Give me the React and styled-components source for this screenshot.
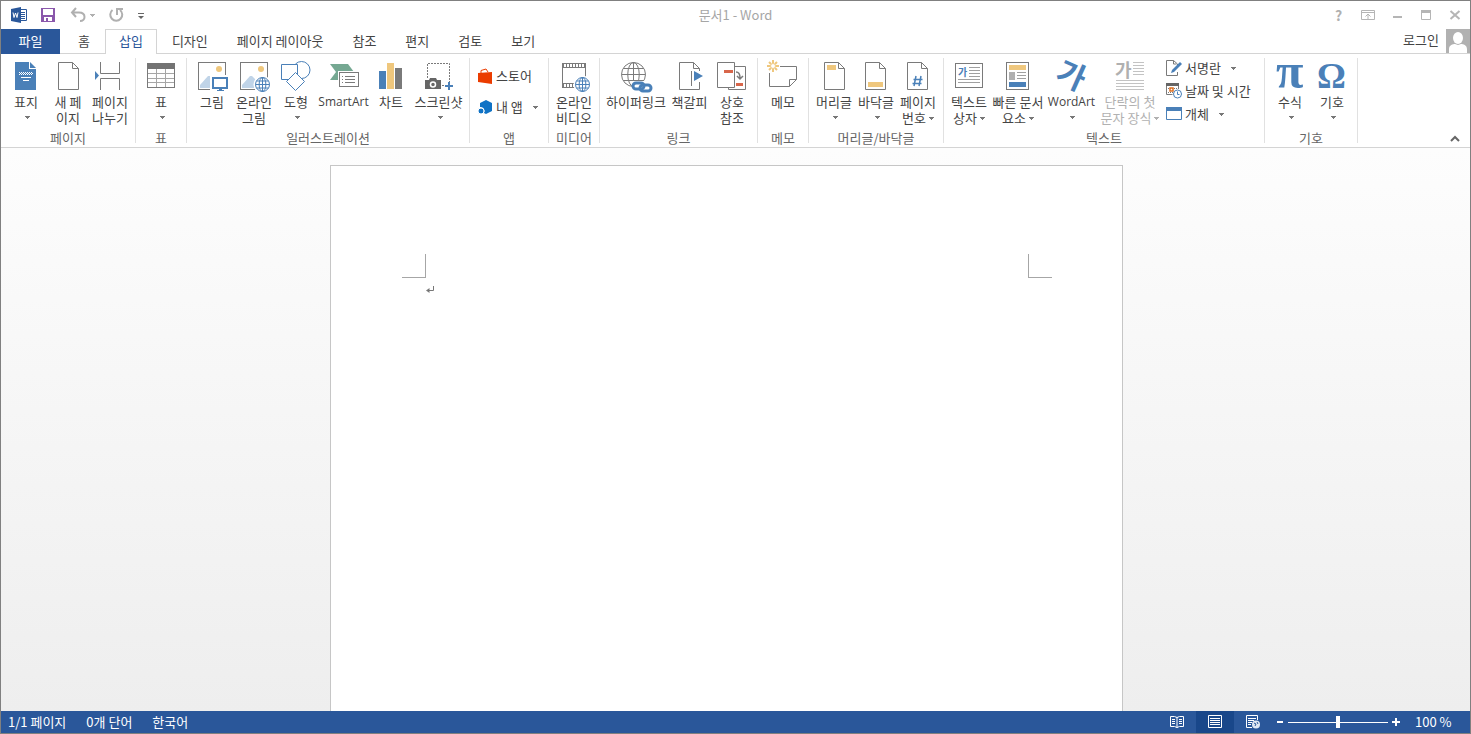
import React, { useState } from "react";
import styled, { createGlobalStyle } from "styled-components";

const BLUE = "#4a80b8";
const GRAY = "#7a7a7a";
const YELLOW = "#efc77d";

/* ---------- icons ---------- */

const Icon = ({ size = 32, children }) => (
    <IconSvg width={size} height={size} viewBox={`0 0 ${size} ${size}`} fill="none" aria-hidden="true">
        {children}
    </IconSvg>
);

const Caret = () => (
    <CaretSvg width="5" height="3" viewBox="0 0 5 3" aria-hidden="true">
        <path d="M0 0h5v1h-1v1h-1v1h-1v-1h-1v-1h-1z" fill="currentColor" />
    </CaretSvg>
);

const Sheet = ({ x = 5 }) => (
    <path
        d={`M${x + 0.5} 2.5h14l6 6v21h-20zM${x + 14.5} 2.5v6h6`}
        fill="#fff"
        stroke={GRAY}
    />
);

const Globe = ({ cx, cy, r, color = BLUE }) => (
    <g stroke={color}>
        <circle cx={cx} cy={cy} r={r} fill="#fff" />
        <ellipse cx={cx} cy={cy} rx={r * 0.48} ry={r} />
        <path d={`M${cx} ${cy - r}v${2 * r}M${cx - r} ${cy}h${2 * r}`} />
        <path d={`M${cx - r * 0.86} ${cy - r / 2}h${r * 1.72}M${cx - r * 0.86} ${cy + r / 2}h${r * 1.72}`} />
    </g>
);

const Picture = () => (
    <>
        <rect x="2.5" y="2.5" width="27" height="27" fill="#fff" stroke={GRAY} />
        <circle cx="23" cy="9" r="3" fill={YELLOW} />
        <path d="M4 28V25L12 16h2l5 5v7z" fill="#c0d4e8" />
    </>
);

const CoverIcon = () => (
    <Icon>
        <path d="M5 2h14v7h7v21H5z" fill={BLUE} />
        <path d="M20 2l6 6h-6z" fill={BLUE} />
        <path d="M9 12.5h14M9 14.5h14" stroke="#fff" strokeDasharray="1 1" />
        <path d="M9 13.5h14" stroke="#fff" strokeDasharray="1 1" strokeDashoffset="1" />
        <path d="M11 17.5h10M13 20.5h6" stroke="#fff" />
    </Icon>
);

const NewPageIcon = () => (
    <Icon>
        <Sheet x={6} />
    </Icon>
);

const PageBreakIcon = () => (
    <Icon>
        <path d="M6.5 2v11.5h19V2M6.5 30V18.5h19V30" stroke={GRAY} />
        <path d="M1 11l4 4.5L1 20z" fill={BLUE} />
    </Icon>
);

const TableIcon = () => (
    <Icon>
        <rect x="2.5" y="3.5" width="27" height="24" fill="#fff" stroke={GRAY} />
        <path d="M2 3h28v6H2z" fill="#737373" />
        <path d="M11.5 9v18M20.5 9v18M3 13.5h26M3 18.5h26M3 22.5h26" stroke="#a6a6a6" />
    </Icon>
);

const PictureIcon = () => (
    <Icon>
        <Picture />
        <path d="M14 15h19v15H14z" fill="#fff" />
        <rect x="17" y="18" width="14" height="10" fill="#fff" stroke={BLUE} strokeWidth="2" />
        <path d="M23 28h3v2h2v1h-7v-1h2z" fill={BLUE} />
    </Icon>
);

const OnlinePictureIcon = () => (
    <Icon>
        <Picture />
        <circle cx="24.5" cy="24.5" r="9" fill="#fff" />
        <Globe cx={24.5} cy={24.5} r={7} />
    </Icon>
);

const ShapesIcon = () => (
    <Icon>
        <g fill="#fff" stroke={BLUE}>
            <circle cx="21.5" cy="10" r="8.5" />
            <path d="M1.5 4.5h16v15h-16z" />
            <path d="M15.5 12.5l9 9-9 9-9-9z" />
        </g>
    </Icon>
);

const SmartArtIcon = () => (
    <Icon>
        <path d="M2 4h18l6 8-5 8H2l6-8z" fill="#75a892" />
        <rect x="10" y="11" width="22" height="17" fill="#fff" />
        <rect x="11.5" y="12.5" width="19" height="14" fill="#fff" stroke={GRAY} />
        <path d="M14 16.5h1m2 0h10M14 19.5h1m2 0h10M14 22.5h1m2 0h10" stroke={GRAY} />
    </Icon>
);

const ChartIcon = () => (
    <Icon>
        <path d="M4 11h7v18H4z" fill={BLUE} />
        <path d="M12 3h7v26h-7z" fill={YELLOW} />
        <path d="M20 8h7v21h-7z" fill={GRAY} />
    </Icon>
);

const ScreenshotIcon = () => (
    <Icon>
        <path d="M4.5 18V3.5h22V22M19 25.5h4" stroke={GRAY} strokeDasharray="2 1" />
        <path d="M2 20h4l1-2h6l1 2h4v9H2z" fill="#666" />
        <circle cx="10" cy="24.5" r="2.5" stroke="#fff" strokeWidth="1.5" />
        <path d="M26 22v8M22 26h8" stroke={BLUE} strokeWidth="2" />
    </Icon>
);

const StoreIcon = () => (
    <Icon size={16}>
        <path d="M4 5V2.500l5-1.500 2 3" stroke="#eb3c00" />
        <path d="M1 5l14-1v12l-14-2z" fill="#eb3c00" />
    </Icon>
);

const MyAppsIcon = () => (
    <Icon size={16}>
        <path d="M9 1l6 3v8l-6 3-2-1a4 4 0 0 0-4-6V4z" fill="#0f72c5" />
        <circle cx="4" cy="12" r="3" fill="#0f72c5" stroke="#fff" />
    </Icon>
);

const VideoIcon = () => (
    <Icon>
        <path d="M4 3h24v5H4zM4 23h15v5H4z" fill={GRAY} />
        <path d="M4.5 8v15M27.5 8v12" stroke={GRAY} />
        <path d="M6 5.5h21M6 25.5h13" stroke="#fff" strokeWidth="3" strokeDasharray="2 1" />
        <circle cx="24.5" cy="24.5" r="9" fill="#fff" />
        <Globe cx={24.5} cy={24.5} r={7} />
    </Icon>
);

const HyperlinkIcon = () => (
    <Icon>
        <Globe cx={13.5} cy={14.5} r={12} color={GRAY} />
        <path d="M12 21h20v12H12z" fill="#fff" />
        <g stroke={BLUE} strokeWidth="3">
            <rect x="13" y="23" width="11" height="6" rx="3" />
            <rect x="20" y="25" width="11" height="6" rx="3" />
        </g>
    </Icon>
);

const BookmarkIcon = () => (
    <Icon>
        <Sheet />
        <path d="M16 11h14v11H16z" fill="#fff" />
        <path d="M17.5 11v15" stroke={GRAY} />
        <path d="M20 11l9 5-9 5z" fill={BLUE} />
    </Icon>
);

const CrossRefIcon = () => (
    <Icon>
        <path d="M12.5 6.5h17v23h-17z" fill="#fff" stroke={GRAY} />
        <path d="M1.5 2.5h17v25h-17z" fill="#fff" stroke={GRAY} />
        <path d="M8 10h9v3H8zM20 23h7v3h-7z" fill="#d8664a" />
        <path d="M20 12c3 0 4 2 4 6M21 16l3 3 3-3" stroke={GRAY} strokeWidth="1.500" />
    </Icon>
);

const MemoIcon = () => (
    <Icon>
        <path d="M13 6.5h16.5v13l-7 7h-20V13M29.5 19.5h-7v7" stroke={GRAY} />
        <g stroke={YELLOW} strokeWidth="2">
            <path d="M6 0v3M6 9v3M0 6h3M9 6h3M2 2l2 2M8 8l2 2M10 2L8 4M4 8l-2 2" />
            <circle cx="6" cy="6" r="2.5" strokeWidth="1" />
        </g>
    </Icon>
);

const HeaderIcon = () => (
    <Icon>
        <Sheet x={6} />
        <path d="M9 5h9v5H9z" fill={YELLOW} />
    </Icon>
);

const FooterIcon = () => (
    <Icon>
        <Sheet />
        <path d="M8 22h15v5H8z" fill={YELLOW} />
    </Icon>
);

const PageNumberIcon = () => (
    <Icon>
        <Sheet />
        <path d="M14 16l-2 10M19 16l-2 10M11.5 19.5h9M10.5 23.5h9" stroke={BLUE} strokeWidth="1.500" />
    </Icon>
);

const TextBoxIcon = () => (
    <Icon>
        <rect x="2.5" y="3.5" width="27" height="24" fill="#fff" stroke={GRAY} />
        <Glyph x="5" y="16" size={10} fill={BLUE}>가</Glyph>
        <path d="M16 7.5h11M16 10.5h11M16 13.5h11M16 16.5h11M5 19.5h22M5 22.5h22" stroke="#a0a0a0" />
    </Icon>
);

const QuickPartsIcon = () => (
    <Icon>
        <rect x="4.5" y="2.5" width="22" height="27" fill="#fff" stroke={GRAY} />
        <path d="M7 5h17v5H7z" fill={YELLOW} />
        <path d="M7 12h6v8H7z" fill="#b0b0b0" />
        <path d="M15 12.5h9M15 15.5h9M15 18.5h9" stroke="#a0a0a0" />
        <path d="M7 22h17v5H7z" fill={BLUE} />
    </Icon>
);

const WordArtIcon = () => (
    <Icon>
        <Glyph x="1" y="27" size={31} fill={BLUE} transform="rotate(24 16 16)">가</Glyph>
    </Icon>
);

const DropCapIcon = () => (
    <Icon>
        <Glyph x="1" y="17" size={18} fill="#b0b0b0">가</Glyph>
        <path
            d="M19 2.5h11M19 5.5h11M19 8.5h11M19 11.5h11M19 14.5h11M2 20.5h28M2 23.5h28M2 26.5h28M2 29.5h28"
            stroke="#c3c3c3"
        />
    </Icon>
);

const SignatureIcon = () => (
    <Icon size={16}>
        <path d="M11.5 5V4l-4-3.500h-7v15h11V12M7.5 .5V4h3" stroke={GRAY} />
        <path d="M5 13l1-3 8-8 2 2-8 8z" fill={BLUE} />
    </Icon>
);

const DateIcon = () => (
    <Icon size={16}>
        <path d="M0 0h13v3H0z" fill="#666" />
        <path d="M.5 3v8.5h6M12.5 3v3" stroke={GRAY} />
        <path d="M2 5.5h9M2 9.5h5" stroke={GRAY} strokeDasharray="1 1" />
        <rect x="4" y="5" width="3" height="3" stroke="#e07020" strokeWidth="1.500" />
        <circle cx="11.5" cy="11" r="4" fill="#fff" stroke={BLUE} />
        <path d="M11.5 8.5v3h2" stroke={BLUE} />
    </Icon>
);

const ObjectIcon = () => (
    <Icon size={16}>
        <path d="M.5 2.5h15v11H.5z" fill="#fff" stroke={BLUE} />
        <path d="M0 1h16v4H0z" fill={BLUE} />
    </Icon>
);

const EquationIcon = () => (
    <Icon>
        <Glyph x="2" y="28" size={50} fill={BLUE} $serif>π</Glyph>
    </Icon>
);

const SymbolIcon = () => (
    <Icon>
        <Glyph x="1" y="28" size={36} fill={BLUE} $serif>Ω</Glyph>
    </Icon>
);

/* ---------- data ---------- */

const TABS = ["홈", "삽입", "디자인", "페이지 레이아웃", "참조", "편지", "검토", "보기"];

const GROUPS = [
    {
        name: "페이지",
        tools: [
            { icon: CoverIcon, lines: ["표지"], menu: true },
            { icon: NewPageIcon, lines: ["새 페", "이지"] },
            { icon: PageBreakIcon, lines: ["페이지", "나누기"] },
        ],
    },
    { name: "표", tools: [{ icon: TableIcon, lines: ["표"], menu: true }] },
    {
        name: "일러스트레이션",
        tools: [
            { icon: PictureIcon, lines: ["그림"] },
            { icon: OnlinePictureIcon, lines: ["온라인", "그림"] },
            { icon: ShapesIcon, lines: ["도형"], menu: true },
            { icon: SmartArtIcon, lines: ["SmartArt"], width: 53, latin: true },
            { icon: ChartIcon, lines: ["차트"] },
            { icon: ScreenshotIcon, lines: ["스크린샷"], menu: true, width: 53 },
        ],
    },
    {
        name: "앱",
        wide: true,
        small: [
            { icon: StoreIcon, text: "스토어" },
            { icon: MyAppsIcon, text: "내 앱", menu: true },
        ],
    },
    { name: "미디어", tools: [{ icon: VideoIcon, lines: ["온라인", "비디오"] }] },
    {
        name: "링크",
        tools: [
            { icon: HyperlinkIcon, lines: ["하이퍼링크"], width: 64 },
            { icon: BookmarkIcon, lines: ["책갈피"], width: 43 },
            { icon: CrossRefIcon, lines: ["상호", "참조"] },
        ],
    },
    { name: "메모", tools: [{ icon: MemoIcon, lines: ["메모"] }] },
    {
        name: "머리글/바닥글",
        tools: [
            { icon: HeaderIcon, lines: ["머리글"], menu: true },
            { icon: FooterIcon, lines: ["바닥글"], menu: true },
            { icon: PageNumberIcon, lines: ["페이지", "번호"], menu: true },
        ],
    },
    {
        name: "텍스트",
        tools: [
            { icon: TextBoxIcon, lines: ["텍스트", "상자"], menu: true },
            { icon: QuickPartsIcon, lines: ["빠른 문서", "요소"], menu: true, width: 56 },
            { icon: WordArtIcon, lines: ["WordArt"], menu: true, width: 51, latin: true },
            { icon: DropCapIcon, lines: ["단락의 첫", "문자 장식"], menu: true, width: 66, disabled: true },
        ],
        small: [
            { icon: SignatureIcon, text: "서명란", menu: true },
            { icon: DateIcon, text: "날짜 및 시간" },
            { icon: ObjectIcon, text: "개체", menu: true },
        ],
    },
    {
        name: "기호",
        tools: [
            { icon: EquationIcon, lines: ["수식"], menu: true },
            { icon: SymbolIcon, lines: ["기호"], menu: true },
        ],
    },
];

/* ---------- components ---------- */

const BigTool = ({ icon: ToolIcon, lines, menu, width, latin, disabled }) => (
    <BigButton type="button" $width={width} disabled={disabled}>
        <ToolIcon />
        <ToolLabel $latin={latin}>
            <span>{lines[0]}</span>
            {lines[1] ? (
                <span>
                    {lines[1]}
                    {menu && <Caret />}
                </span>
            ) : (
                <CaretLine>{menu && <Caret />}</CaretLine>
            )}
        </ToolLabel>
    </BigButton>
);

const SmallTool = ({ icon: ToolIcon, text, menu }) => (
    <SmallButton type="button">
        <ToolIcon />
        <span>{text}</span>
        {menu && <Caret />}
    </SmallButton>
);

const TitleBar = () => (
    <TitleRow>
        <QuickAccess>
            <QuickButton type="button" aria-label="Word" $width={36}>
                <Icon size={16}>
                    <path d="M9 2.5h6.5v11H9" fill="#fff" stroke="#2a579a" />
                    <path d="M10 5.5h4M10 7.5h4M10 9.5h4M10 11.5h4" stroke="#2a579a" />
                    <path d="M0 2l10-2v16l-10-2z" fill="#2a579a" />
                    <path d="M2 5.500l1 5 1.500-4.500 1.500 4.500 1-5" stroke="#fff" />
                </Icon>
            </QuickButton>
            <QuickButton type="button" aria-label="저장" $width={22}>
                <Icon size={16}>
                    <path d="M1 1h14v14H1z" fill="#8a57ab" />
                    <path d="M3 2h10v6H3zM4 10h8v4H8v-3H6v3H4z" fill="#fff" />
                </Icon>
            </QuickButton>
            <QuickButton type="button" aria-label="실행 취소" $width={46}>
                <Icon size={16}>
                    <path d="M6 1L2 5.500l4 4.500M2 5.500h7c4 0 5.500 2 5.500 4.500 0 2-1.500 4-4.500 4" stroke="#b0b0b0" strokeWidth="2" />
                </Icon>
                <Caret />
            </QuickButton>
            <QuickButton type="button" aria-label="다시 실행" $width={22}>
                <Icon size={16}>
                    <path d="M4.500 3a6 6 0 1 0 7.500 0M9 8V2h6" stroke="#b0b0b0" strokeWidth="2" />
                </Icon>
            </QuickButton>
            <QuickButton type="button" aria-label="빠른 실행 도구 모음 사용자 지정" $width={27}>
                <Icon size={8}>
                    <path d="M1 2.5h6" stroke="#666" />
                    <path d="M1 5h6L4 8z" fill="#666" />
                </Icon>
            </QuickButton>
        </QuickAccess>
        <DocTitle>문서1 - Word</DocTitle>
        <WindowButtons>
            <WindowButton type="button" aria-label="도움말">
                <b>?</b>
            </WindowButton>
            <WindowButton type="button" aria-label="리본 메뉴 표시 옵션">
                <Icon size={14}>
                    <path d="M.5 2.5h13v9H.5zM1 4.5h12M7 11V6M4.5 8.5L7 6l2.500 2.500" stroke="#b5b5b5" />
                </Icon>
            </WindowButton>
            <WindowButton type="button" aria-label="최소화">
                <Icon size={14}>
                    <path d="M3 8h9v2H3z" fill="#b5b5b5" />
                </Icon>
            </WindowButton>
            <WindowButton type="button" aria-label="최대화">
                <Icon size={14}>
                    <path d="M2.5 2.5h9v9h-9z" stroke="#b5b5b5" />
                    <path d="M2 2h10v3H2z" fill="#b5b5b5" />
                </Icon>
            </WindowButton>
            <WindowButton type="button" aria-label="닫기">
                <Icon size={14}>
                    <path d="M2.5 3l9 8M11.5 3l-9 8" stroke="#b5b5b5" strokeWidth="2" />
                </Icon>
            </WindowButton>
        </WindowButtons>
    </TitleRow>
);

const StatusBar = () => {
    const [zoom, setZoom] = useState(100);

    return (
        <StatusRow>
            <StatusTexts>
                <span>1/1 페이지</span>
                <span>0개 단어</span>
                <span>한국어</span>
            </StatusTexts>
            <ViewButton type="button" aria-label="읽기 모드">
                <Icon size={14}>
                    <path d="M.5 1.500h4l2.500 1 2.500-1h4v10h-4l-2.500 1-2.500-1h-4zM7 2v11" stroke="#fff" />
                    <path d="M2 4.5h3M2 6.5h3M2 8.5h3M9 4.5h3M9 6.5h3M9 8.5h3" stroke="#fff" />
                </Icon>
            </ViewButton>
            <ViewButton type="button" aria-label="인쇄 모양" $active>
                <Icon size={14}>
                    <path d="M.5 .5h13v12H.5zM2 3.5h10M2 5.5h10M2 7.5h10M2 9.5h10" stroke="#fff" />
                </Icon>
            </ViewButton>
            <ViewButton type="button" aria-label="웹 모양">
                <Icon size={14}>
                    <path d="M6 12.5H.5V.5h11V5M2 3.5h8M2 5.5h6M2 7.5h4M2 9.5h3" stroke="#fff" />
                    <circle cx="10" cy="9.5" r="4" fill="#dfe7f3" />
                    <path d="M8 8l2 1-1 2M11 7l1 2" stroke="#2a579a" />
                </Icon>
            </ViewButton>
            <ZoomButton type="button" aria-label="축소" onClick={() => setZoom(zoom - 10)}>
                <Icon size={10}>
                    <path d="M2 4h6v2H2z" fill="#fff" />
                </Icon>
            </ZoomButton>
            <ZoomSlider
                type="range"
                min="0"
                max="200"
                value={zoom}
                aria-label="확대/축소"
                onChange={(e) => setZoom(Number(e.target.value))}
            />
            <ZoomButton type="button" aria-label="확대" onClick={() => setZoom(zoom + 10)}>
                <Icon size={10}>
                    <path d="M1 4h8v2H1zM4 1h2v8H4z" fill="#fff" />
                </Icon>
            </ZoomButton>
            <ZoomValue>{zoom} %</ZoomValue>
        </StatusRow>
    );
};

const App = () => {
    const [activeTab, setActiveTab] = useState("삽입");

    return (
        <>
            <GlobalStyle />
            <Window>
                <TitleBar />
                <TabRow>
                    <FileTab type="button">파일</FileTab>
                    {TABS.map((tab) => (
                        <Tab key={tab} type="button" $active={tab === activeTab} onClick={() => setActiveTab(tab)}>
                            {tab}
                        </Tab>
                    ))}
                    <Login href="#login">로그인</Login>
                    <Avatar width="24" height="24" viewBox="0 0 24 24" aria-hidden="true">
                        <path d="M0 0h24v24H0z" fill="#b1b1b1" />
                        <ellipse cx="12" cy="9" rx="5" ry="6" fill="#fff" />
                        <path d="M3 24v-4c0-4 4-5 6-5l3 1 3-1c2 0 6 1 6 5v4z" fill="#fff" />
                    </Avatar>
                </TabRow>
                <Ribbon>
                    {GROUPS.map((group) => (
                        <Group key={group.name}>
                            <Tools>
                                {group.tools?.map((tool) => (
                                    <BigTool key={tool.lines.join(" ")} {...tool} />
                                ))}
                                {group.small && (
                                    <SmallColumn $wide={group.wide}>
                                        {group.small.map((tool) => (
                                            <SmallTool key={tool.text} {...tool} />
                                        ))}
                                    </SmallColumn>
                                )}
                            </Tools>
                            <GroupName>{group.name}</GroupName>
                        </Group>
                    ))}
                    <CollapseButton type="button" aria-label="리본 메뉴 축소">
                        <Icon size={10}>
                            <path d="M1 8l4-4 4 4" stroke="#666" strokeWidth="2" />
                        </Icon>
                    </CollapseButton>
                </Ribbon>
                <Workspace>
                    <Paper>
                        <Corners>
                            <Corner $side="right" />
                            <Corner $side="left" />
                        </Corners>
                        <Paragraph>
                            <Icon size={8}>
                                <path d="M7.5 0v4.5H2" stroke="#777" />
                                <path d="M0 4.500L3.500 2v5z" fill="#777" />
                            </Icon>
                        </Paragraph>
                    </Paper>
                </Workspace>
                <StatusBar />
            </Window>
        </>
    );
};

/* ---------- styles ---------- */

const GlobalStyle = createGlobalStyle`
    * {
        box-sizing: border-box;
    }
    body {
        margin: 0;
        background: #fff;
    }
    body, button, input {
        font-family: "Noto Sans CJK KR", sans-serif;
        font-size: 13px;
        line-height: 16px;
        color: #444;
    }
    button {
        margin: 0;
        padding: 0;
        border: 0;
        background: none;
        white-space: nowrap;
    }
`
const Window = styled.div`
    display: flex;
    flex-direction: column;
    height: 100vh;
    border: 1px solid #808080;
    overflow: hidden;
`
const IconSvg = styled.svg`
    display: block;
    flex: none;
    overflow: visible;
`
const CaretSvg = styled.svg`
    flex: none;
    color: #777;
`
const Glyph = styled.text`
    font-family: ${({ $serif }) => ($serif ? '"Liberation Serif", serif' : '"Noto Sans CJK KR", sans-serif')};
    font-size: ${({ size }) => size}px;
    font-weight: bold;
`
const TitleRow = styled.header`
    display: grid;
    grid-template-columns: 1fr auto 1fr;
    align-items: center;
    flex: none;
    height: 28px;
`
const QuickAccess = styled.div`
    display: flex;
    align-items: center;
`
const QuickButton = styled.button`
    display: flex;
    align-items: center;
    justify-content: center;
    gap: 4px;
    width: ${({ $width }) => $width}px;
    height: 24px;
    ${CaretSvg} {
        color: #b0b0b0;
    }
`
const DocTitle = styled.h1`
    margin: 0;
    font-size: 13px;
    font-weight: 400;
    line-height: 16px;
    color: #a6a6a6;
`
const WindowButtons = styled.div`
    display: flex;
    justify-content: flex-end;
    padding-right: 1px;
`
const WindowButton = styled.button`
    display: flex;
    align-items: center;
    justify-content: center;
    width: 29px;
    height: 24px;
    color: #b0b0b0;
    b {
        font-size: 14px;
        color: #b0b0b0;
    }
`
const TabRow = styled.nav`
    display: flex;
    flex: none;
    gap: 1px;
    height: 25px;
    box-shadow: inset 0 -1px #d4d4d4;
`
const FileTab = styled.button`
    width: 59px;
    margin-right: 3px;
    padding-bottom: 2px;
    background: #2a579a;
    color: #fff;
`
const Tab = styled.button`
    padding: 0 13px 3px;
    border: 1px solid transparent;
    border-bottom: 0;
    ${({ $active }) => $active && `
        border-color: #d4d4d4;
        background: #fff;
        color: #2a579a;
    `}
`
const Login = styled.a`
    margin-left: auto;
    margin-right: 6px;
    line-height: 22px;
    color: #444;
    text-decoration: none;
`
const Avatar = styled.svg`
    display: block;
    flex: none;
`
const Ribbon = styled.section`
    display: flex;
    flex: none;
    height: 94px;
    padding: 4px 0;
    border-bottom: 1px solid #d4d4d4;
`
const Group = styled.div`
    display: flex;
    flex-direction: column;
    justify-content: space-between;
    flex: none;
    padding: 0 4px;
    border-right: 1px solid #e1e1e1;
`
const Tools = styled.div`
    display: flex;
`
const BigButton = styled.button`
    display: flex;
    flex-direction: column;
    align-items: center;
    gap: 2px;
    width: ${({ $width }) => $width || 42}px;
    padding-top: 2px;
    &:disabled {
        color: #b1b1b1;
    }
    &:disabled ${CaretSvg} {
        color: #b1b1b1;
    }
`
const ToolLabel = styled.span`
    display: flex;
    flex-direction: column;
    ${({ $latin }) => $latin && `
        font-family: "Open Sans", sans-serif;
        font-size: 12px;
    `}
    span {
        display: flex;
        align-items: center;
        justify-content: center;
        gap: 3px;
        height: 16px;
    }
`
const CaretLine = styled.span`
    padding: 0 0 2px 3px;
`
const SmallColumn = styled.div`
    display: flex;
    flex-direction: column;
    width: ${({ $wide }) => ($wide ? 70 : 97)}px;
    padding: ${({ $wide }) => ($wide ? "10px 0 0 3px" : "2px 0 0 3px")};
    gap: ${({ $wide }) => ($wide ? 15 : 7)}px;
`
const SmallButton = styled.button`
    display: flex;
    align-items: center;
    gap: 3px;
    height: 16px;
    ${CaretSvg} {
        margin-left: 7px;
    }
`
const GroupName = styled.div`
    height: 12px;
    line-height: 14px;
    text-align: center;
    white-space: nowrap;
    color: #666;
`
const CollapseButton = styled.button`
    align-self: flex-end;
    margin-left: auto;
    margin-right: 10px;
`
const Workspace = styled.main`
    display: flex;
    justify-content: center;
    flex: 1;
    min-height: 0;
    padding: 17px 18px 0 0;
    background: linear-gradient(#fdfdfd, #eee);
`
const Paper = styled.article`
    width: 793px;
    padding: 88px 70px 0 71px;
    border: 1px solid #c6c6c6;
    border-bottom: 0;
    background: #fff;
`
const Corners = styled.div`
    display: flex;
    justify-content: space-between;
`
const Corner = styled.div`
    width: 24px;
    height: 24px;
    border-bottom: 1px solid #a6a6a6;
    border-${({ $side }) => $side}: 1px solid #a6a6a6;
`
const Paragraph = styled.div`
    padding: 8px 24px;
`
const StatusRow = styled.footer`
    display: flex;
    align-items: center;
    flex: none;
    height: 22px;
    background: #2a579a;
    color: #fff;
`
const StatusTexts = styled.div`
    display: flex;
    flex: 1;
    gap: 20px;
    padding-left: 7px;
`
const ViewButton = styled.button`
    display: flex;
    align-items: center;
    justify-content: center;
    width: 38px;
    height: 22px;
    background: ${({ $active }) => ($active ? "#19478a" : "none")};
`
const ZoomButton = styled.button`
    width: 10px;
    height: 10px;
    margin: 0 3px;
`
const ZoomSlider = styled.input`
    appearance: none;
    width: 100px;
    height: 12px;
    margin: 0;
    background: linear-gradient(#fff, #fff) center / 100% 1px no-repeat;
    &::-webkit-slider-thumb {
        appearance: none;
        width: 4px;
        height: 12px;
        background: #fff;
    }
`
const ZoomValue = styled.span`
    width: 66px;
    padding-left: 11px;
`

export default App;
